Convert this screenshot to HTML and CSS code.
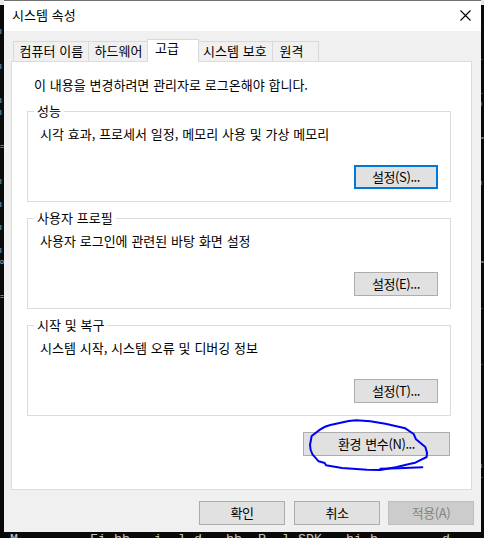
FILE: index.html
```html
<!DOCTYPE html>
<html lang="ko">
<head>
  <meta charset="UTF-8">
  <meta name="viewport" content="width=device-width, initial-scale=1.0">
  <title>시스템 속성</title>
  <link rel="stylesheet" href="styles.css">
</head>
<body>
  <!-- Console behind the dialog -->
  <pre class="console left">l


l


l
l


=


l

l

l

l
o


=</pre>
  <pre class="console right">-


-
l


=



l






=



-




-








l
-</pre>
  <pre class="console bottom">M         Fi hb   i  l d   hb  R  l SDK   hi b        d</pre>

  <div class="dialog">
    <div class="title-bar">
      <span>시스템 속성</span>
      <svg class="close" viewBox="0 0 11 11"><path d="M.5 .5l10 10M10.5 .5l-10 10"/></svg>
    </div>

    <div class="tabs">
      <div class="tab name">컴퓨터 이름</div>
      <div class="tab hardware">하드웨어</div>
      <div class="tab active">고급</div>
      <div class="tab protect">시스템 보호</div>
      <div class="tab remote">원격</div>
    </div>

    <div class="panel">
      <p class="notice">이 내용을 변경하려면 관리자로 로그온해야 합니다.</p>

      <fieldset>
        <legend>성능</legend>
        <p>시각 효과, 프로세서 일정, 메모리 사용 및 가상 메모리</p>
        <button class="focused">설정(S)...</button>
      </fieldset>

      <fieldset>
        <legend>사용자 프로필</legend>
        <p>사용자 로그인에 관련된 바탕 화면 설정</p>
        <button>설정(E)...</button>
      </fieldset>

      <fieldset>
        <legend>시작 및 복구</legend>
        <p>시스템 시작, 시스템 오류 및 디버깅 정보</p>
        <button>설정(T)...</button>
      </fieldset>

      <div class="env">
        <button>환경 변수(N)...</button>
        <!-- Pen mark -->
        <svg class="mark" viewBox="0 0 390 189">
          <path d="M140 24L163 22L205 25L250 32L310 46L335 63L342 79L370 102L375 119L374 132L340 149L325 152L285 162L235 171L195 170L120 165L72 157L68 150L50 145L32 125Q24 112 24 96L29 69L55 49Q68 40 85 36L140 24"/>
          <path d="M235 167L290 166L361 163"/>
        </svg>
      </div>
    </div>

    <div class="buttons">
      <button class="ok">확인</button>
      <button>취소</button>
      <button disabled>적용(A)</button>
    </div>
  </div>
</body>
</html>
```

FILE: styles.css
```css
* {
  box-sizing: border-box;
}

body {
  margin: 0;
  padding-left: 4px;
  width: 484px;
  height: 538px;
  overflow: hidden;
  position: relative;
  background: linear-gradient(#e8e8e8 5px, #0a0a0a 5px);
  font-family: "Noto Sans CJK KR", sans-serif;
  font-size: 13px;
  line-height: 17px;
  word-spacing: 0.2px;
  color: #000;
}

p {
  margin: 0;
}

.console {
  position: absolute;
  margin: 0;
  overflow: hidden;
  color: #c8c8c8;
  word-spacing: 0;
}

.left {
  left: 0;
  top: 26px;
  width: 4px;
  font: 7px/11.5px "Liberation Sans", sans-serif;
}

.right {
  left: 481px;
  top: 54px;
  width: 3px;
  font: 5px/11.3px "Liberation Sans", sans-serif;
}

.bottom {
  left: 10px;
  top: 532px;
  width: 474px;
  height: 6px;
  font: 13.33px/16px "Liberation Mono", monospace;
}

.dialog {
  position: relative;
  width: 477px;
  height: 532px;
  border-top: 1px solid #707070;
  background: #f0f0f0;
  white-space: nowrap;
}

.title-bar {
  display: flex;
  justify-content: space-between;
  height: 30px;
  padding: 5px 10px 0 8px;
  background: #fff;
}

.close {
  width: 11px;
  height: 11px;
  margin-top: 4px;
  fill: none;
  stroke: #000;
  stroke-width: 1.1;
}

.tabs {
  display: flex;
  align-items: flex-end;
  height: 30px;
  padding-left: 9px;
}

.tab {
  height: 20px;
  border: 1px solid #d9d9d9;
  border-right: 0;
  border-bottom: 0;
  padding: 0 0 0 5.5px;
}

.name {
  width: 75px;
}

.hardware {
  width: 59px;
}

.tab.active {
  position: relative;
  z-index: 1;
  width: 52px;
  height: 23px;
  margin-bottom: -1px;
  border-right: 1px solid #d9d9d9;
  background: #fff;
  padding-left: 7px;
  line-height: 16px;
}

.protect {
  width: 73px;
  border-left: 0;
  padding-left: 4px;
}

.remote {
  width: 47px;
  border-right: 1px solid #d9d9d9;
  padding-left: 6.5px;
}

.panel {
  width: 461px;
  height: 429px;
  margin-left: 7px;
  border: 1px solid #dcdcdc;
  background: #fff;
  padding: 14px 20px 0 15px;
}

.notice {
  padding-left: 7px;
  margin-bottom: 10px;
}

fieldset {
  display: flex;
  flex-direction: column;
  height: 99px;
  margin: 0 0 8px;
  border: 1px solid #dcdcdc;
  padding: 5px 12px 12px 12px;
}

legend {
  height: 17px;
  margin-left: -6px;
  padding: 0 3px;
  line-height: 16px;
}

button {
  width: 84px;
  height: 24px;
  border: 1px solid #adadad;
  padding: 0;
  background: #e1e1e1;
  color: #000;
  font: inherit;
  line-height: 20px;
  letter-spacing: -0.4px;
  word-spacing: 1px;
}

fieldset button {
  align-self: flex-end;
  margin-top: auto;
}

.focused {
  border: 2px solid #0078d7;
}

.env {
  position: relative;
  display: flex;
  justify-content: flex-end;
  padding: 8px 1px 0 0;
}

.env button {
  width: 147px;
}

.mark {
  position: absolute;
  left: 275px;
  top: -11px;
  width: 130px;
  height: 63px;
  fill: none;
  stroke: #0000f5;
  stroke-width: 6;
  stroke-linecap: round;
  stroke-linejoin: round;
}

.buttons {
  display: flex;
  justify-content: flex-end;
  gap: 8px;
  padding: 11px 7px 0 0;
}

.buttons button {
  width: 86px;
}

.buttons .ok {
  margin-right: 1px;
}

.buttons button:disabled {
  border-color: #bfbfbf;
  background: #ccc;
  color: #838383;
}
```
